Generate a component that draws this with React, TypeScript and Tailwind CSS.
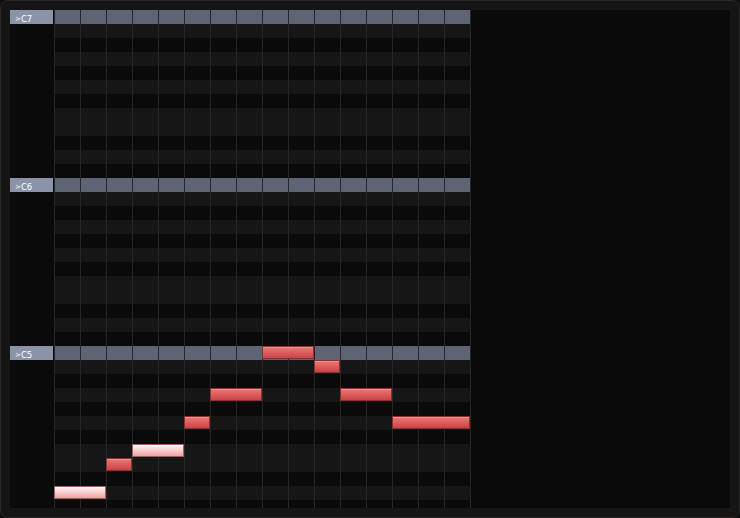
import React from 'react'

// Piano roll: three octaves from C7 down, 16 steps per row
const ROWS = 36
const COLS = 16
const BLACK = new Set([2, 4, 6, 9, 11])

interface Note {
  row: number
  col: number
  len: number
  selected?: boolean
}

const notes: Note[] = [
  { row: 24, col: 8, len: 2 },
  { row: 25, col: 10, len: 1 },
  { row: 27, col: 6, len: 2 },
  { row: 27, col: 11, len: 2 },
  { row: 29, col: 5, len: 1 },
  { row: 29, col: 13, len: 3 },
  { row: 31, col: 3, len: 2, selected: true },
  { row: 32, col: 2, len: 1 },
  { row: 34, col: 0, len: 2, selected: true },
]

function NoteBlock({ note }: { note: Note }) {
  return (
    <div
      className={
        note.selected
          ? 'absolute top-0 h-[13px] border border-[#9c6262] bg-linear-to-b from-[#fff6f6] to-[#eea2a2] shadow-[inset_0_1px_0_#ffffff]'
          : 'absolute top-0 h-[13px] border border-[#873232] bg-linear-to-b from-[#f07474] to-[#c94545] shadow-[inset_0_1px_0_#f59090]'
      }
      style={{ left: 44 + note.col * 26, width: note.len * 26 }}
    />
  )
}

function Row({ r }: { r: number }) {
  const pos = r % 12
  const isC = pos === 0
  const isBlack = BLACK.has(pos)
  const octave = 7 - Math.floor(r / 12)
  const cellBg = isC ? 'bg-[#5e6474]' : isBlack ? 'bg-[#0a0a0a]' : 'bg-[#161616]'

  return (
    <div className="relative flex h-[14px] shrink-0">
      <div className="w-[44px] shrink-0">
        {isC && (
          <div className="flex h-full w-[43px] items-end bg-[#8a93a7] pl-[5px] text-[8.5px] leading-[10px] text-white [font-family:'DejaVu_Sans',sans-serif]">
            <span className="text-[7px]">&gt;</span>C{octave}
          </div>
        )}
      </div>
      {Array.from({ length: COLS }).map((_, c) => (
        <div key={c} className={`w-[26px] shrink-0 border-l border-[#262626] ${cellBg}`} />
      ))}
      <div className="w-px shrink-0 bg-[#262626]" />
      {notes
        .filter((n) => n.row === r)
        .map((n, i) => (
          <NoteBlock key={i} note={n} />
        ))}
    </div>
  )
}

export default function App() {
  return (
    <div className="h-[518px] w-[740px] bg-[#0e0e0e]">
      <div className="h-full rounded-lg border border-[#2a2725] bg-[#151515] p-[9px]">
        <div className="flex h-full flex-col overflow-hidden bg-[#0a0a0a]">
          {Array.from({ length: ROWS }).map((_, r) => (
            <Row key={r} r={r} />
          ))}
        </div>
      </div>
    </div>
  )
}
